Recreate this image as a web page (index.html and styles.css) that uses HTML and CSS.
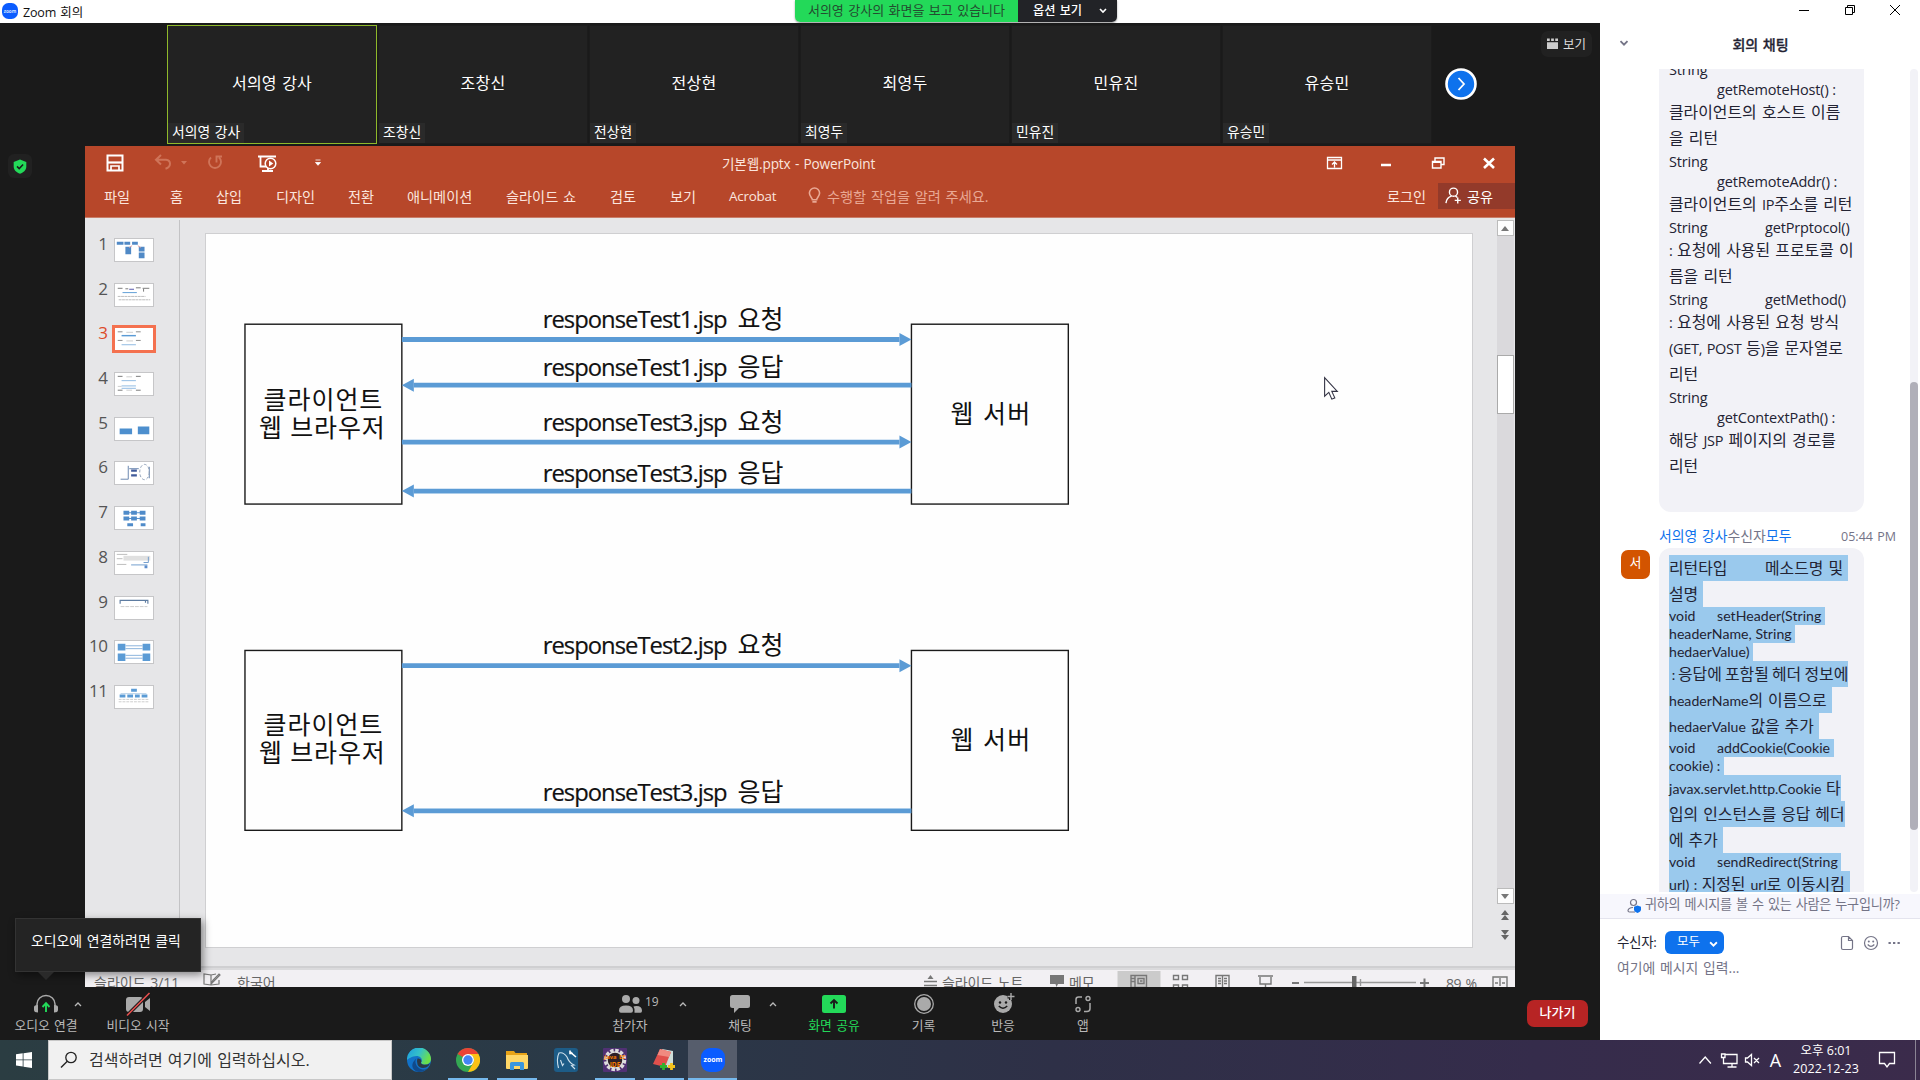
FILE: index.html
```html
<!DOCTYPE html>
<html lang="ko">
<head>
<meta charset="utf-8">
<title>Zoom 회의</title>
<link rel="stylesheet" href="styles.css">
</head>
<body>
<svg class="defs" width="0" height="0">
  <defs>
    <symbol id="caret-up" viewBox="0 0 8 6"><path d="M1 5l3-3 3 3" fill="none" stroke="currentColor" stroke-width="1.3"/></symbol>
    <symbol id="caret-down" viewBox="0 0 8 6"><path d="M1 1l3 3 3-3" fill="none" stroke="currentColor" stroke-width="1.6"/></symbol>
  </defs>
</svg>
<div class="screen">
  <header class="titlebar">
    <svg class="zoom-mini" viewBox="0 0 16 16"><rect width="16" height="16" rx="6.5" fill="#0b5cff"/><text x="8" y="9.6" font-size="4.6" font-weight="700" text-anchor="middle" fill="#cfe0ff">zoom</text></svg>
    <span class="app-title">Zoom 회의</span>
    <div class="share-banner">
      <span class="share-status">서의영 강사의 화면을 보고 있습니다</span>
      <span class="share-options">옵션 보기<svg width="8" height="6"><use href="#caret-down"/></svg></span>
    </div>
    <div class="window-controls">
      <svg viewBox="0 0 12 12"><path d="M1 6.5h10" stroke="#000"/></svg>
      <svg viewBox="0 0 12 12"><path d="M1.5 3.5h7v7h-7zM3.5 3.5v-2h7v7h-2" fill="none" stroke="#000"/></svg>
      <svg viewBox="0 0 12 12"><path d="M1 1l10 10M11 1L1 11" stroke="#000"/></svg>
    </div>
  </header>

  <main class="meeting">
    <section class="stage">
      <div class="strip">
        <div class="tile speaking"><b>서의영 강사</b><span>서의영 강사</span></div>
        <div class="tile"><b>조창신</b><span>조창신</span></div>
        <div class="tile"><b>전상현</b><span>전상현</span></div>
        <div class="tile"><b>최영두</b><span>최영두</span></div>
        <div class="tile"><b>민유진</b><span>민유진</span></div>
        <div class="tile"><b>유승민</b><span>유승민</span></div>
        <svg class="next" viewBox="0 0 32 32"><circle cx="16" cy="16" r="14.5" fill="#0e72ed" stroke="#fff" stroke-width="2.6"/><path d="M13.5 10l5.5 6-5.5 6" fill="none" stroke="#fff" stroke-width="1.8"/></svg>
        <div class="view-btn"><svg viewBox="0 0 12 12"><path d="M0 4.5h12V12H0zM0 .5h3v2.7H0zM4.5 .5h3v2.7h-3zM9 .5h3v2.7H9z" fill="#ccc"/></svg>보기</div>
      </div>

      <div class="shared">
        <div class="shield"><svg viewBox="0 0 14 15"><path d="M7 .5l6.3 2.4v4.6c0 3.6-2.6 6-6.3 7.2C3.3 13.5.7 11.1.7 7.5V2.9z" fill="#23d959"/><path d="M4 7.4l2.2 2.2 3.9-4" fill="none" stroke="#1a1a1a" stroke-width="1.5"/></svg></div>
        <div class="ppt">
          <div class="ppt-head">
            <div class="ppt-title">
              <svg class="quick" width="240" height="34" viewBox="85 146 240 34">
                <path d="M107.5 155.500h15v15h-15z" fill="none" stroke="#fff" stroke-width="2"/><path d="M108 162.500h14" stroke="#fff" stroke-width="2.200"/><path d="M111 170.500v-4.500h8v4.500" fill="none" stroke="#fff" stroke-width="1.700"/>
                <path d="M161 155l-5 4.700 5 4.700M156.500 159.700h9.500q4 .5 4 4t-4.500 5" fill="none" stroke="#cf7459" stroke-width="2"/><path d="M181 161h6l-3 3.500z" fill="#cf7459"/>
                <path d="M211 157.500a6 6 0 1 0 8 0M222 156.500h-5.500v6" fill="none" stroke="#cf7459" stroke-width="1.900"/>
                <path d="M258 156.500h18M260.500 157v9.500h5.500M262 171h11M268 168v3" fill="none" stroke="#fff" stroke-width="1.800"/><circle cx="270.500" cy="163.500" r="5.300" fill="#b7472a" stroke="#fff" stroke-width="1.500"/><path d="M269 160.500l4.300 3-4.300 3z" fill="#fff"/>
                <path d="M315.500 160h5M315.500 162.500h5l-2.500 2.800z" fill="#fff" stroke="#fff" stroke-width=".8"/>
              </svg>
              <span class="doc-name">기본웹.pptx - PowerPoint</span>
              <svg class="ppt-controls" width="195" height="34" viewBox="1320 146 195 34">
                <path d="M1327.500 157.500h14v11h-14zM1327.500 160h14M1334.500 167.500v-5M1332 164.500l2.500-2.500 2.500 2.500" fill="none" stroke="#fff" stroke-width="1.300"/>
                <path d="M1381 165h10" stroke="#fff" stroke-width="2.500"/>
                <path d="M1432.500 161.500h8.500v6.500h-8.500zM1432.500 162.300h8.500M1435 161v-3h9v6.500h-3" fill="none" stroke="#fff" stroke-width="1.400"/>
                <path d="M1484 158.500l10 9.500M1494 158.500l-10 9.500" stroke="#fff" stroke-width="2.600"/>
              </svg>
            </div>
            <nav class="tabs">
              <span>파일</span><span>홈</span><span>삽입</span><span>디자인</span><span>전환</span><span>애니메이션</span><span>슬라이드 쇼</span><span>검토</span><span>보기</span><span class="latin">Acrobat</span>
              <span class="tell"><svg viewBox="0 0 12 16"><path d="M4 12c0-2-2.800-3.200-2.800-6.300a4.800 4.800 0 0 1 9.600 0C10.800 8.800 8 10 8 12zM4 14h4" fill="none" stroke="currentColor" stroke-width="1.500"/></svg>수행할 작업을 알려 주세요.</span>
              <span class="login">로그인</span>
              <span class="share"><svg viewBox="0 0 18 18"><circle cx="9" cy="5.500" r="4.300" fill="none" stroke="#fff" stroke-width="1.500"/><path d="M1 17c.5-4 3-6.500 6-7.300M11 9.500l2 1.500M13.500 11v6.500M10.300 14.200h6.500" fill="none" stroke="#fff" stroke-width="1.500"/></svg>공유</span>
            </nav>
          </div>
          <div class="ppt-body">
            <ol class="thumbs">
              <li><i>1</i><svg viewBox="0 0 38 23"><path d="M1 3h7v3H1zM9 3h6v3H9zM17 3h6v3h-6zM10 8h6v8h-6zM24 8h6v5h-6zM24 14h6v6h-6z" fill="#5089c6"/><path d="M17 7l-3 2M23 7l3 2" stroke="#e09a9a"/></svg></li>
              <li><i>2</i><svg viewBox="0 0 38 23"><path d="M2 4.500h5M10 5h3M21 4h5M28 4.500h7M29 8v-3" stroke="#777" fill="none"/><path d="M14 5.500h5" stroke="#5252a8"/><path d="M7 9h15" stroke="#5b9bd5"/><path d="M2 13h29M3 16.500h33" stroke="#bbb" stroke-dasharray="3 .5"/></svg></li>
              <li class="sel"><i>3</i><svg viewBox="0 0 38 23"><path d="M2 4h5M21 4h5M2 13h5M21 13h5" stroke="#888"/><path d="M11 4.500h7M11 13.500h7" stroke="#ccc"/><path d="M6 8h15" stroke="#5b9bd5" stroke-width="1.500"/><path d="M6 17.500h15" stroke="#8db9e2"/></svg></li>
              <li><i>4</i><svg viewBox="0 0 38 23"><path d="M2 3.500h5M21 3.500h5M2 18h5M21 18h5" stroke="#777"/><path d="M11 4h6M2 14h4M11 18h6" stroke="#ccc"/><path d="M6 8h15M6 13.500h15M6 16h15" stroke="#8db9e2"/></svg></li>
              <li><i>5</i><svg viewBox="0 0 38 23"><path d="M4 11h13v6H4zM23 9h12v8H23z" fill="#4d8fce"/></svg></li>
              <li><i>6</i><svg viewBox="0 0 38 23"><path d="M13 4v14H5M14 7h10M35 5v12" stroke="#6784ad" fill="none"/><path d="M16 9h6M16 14h6" stroke="#405b9b" stroke-width="2.500"/><ellipse cx="30" cy="10.500" rx="5" ry="8" fill="none" stroke="#8b9cb4" stroke-dasharray="3 2"/></svg></li>
              <li><i>7</i><svg viewBox="0 0 38 23"><path d="M8 4h6v4H8zM16 4h6v4h-6zM25 4h6v4h-6zM8 10h6v4H8zM16 10h6v4h-6zM25 10h6v4h-6zM12 17h6v3h-6zM26 17h5v3h-5z" fill="#4f8bc9"/><path d="M13 6h13M13 12h13" stroke="#4f8bc9"/></svg></li>
              <li><i>8</i><svg viewBox="0 0 38 23"><path d="M1 2.500h11M1 7h6M1 13h10" stroke="#bbb"/><path d="M8 4h28v5H8z" fill="#e0e0e0"/><path d="M34 5v6h-5M16 13.500h17" stroke="#6d9acc" fill="none"/><path d="M30 14h3v3h-3z" fill="#5b8ccc"/></svg></li>
              <li><i>9</i><svg viewBox="0 0 38 23"><path d="M4.500 7V3.500h29V7M31 6V4" fill="none" stroke="#5e7ca1" stroke-width="1.200"/><path d="M5 10h28" stroke="#ccc" stroke-dasharray="4 1"/></svg></li>
              <li><i>10</i><svg viewBox="0 0 38 23"><path d="M2 3h8v7H2zM28 3h8v7h-8zM2 13h8v8H2zM28 13h8v8h-8z" fill="#5b9bd5"/><path d="M10 5h18M10 8h18M10 15h18M10 18h18" stroke="#86b0da"/></svg></li>
              <li><i>11</i><svg viewBox="0 0 38 23"><path d="M16 3h6v3h-6zM4 9h6v3H4zM12 9h6v3h-6zM20 9h5v3h-5zM27 9h6v3h-6z" fill="#5b9bd5"/><path d="M5 8h27" stroke="#b5cfe8"/><path d="M3 14h32M3 16.500h32" stroke="#ccc" stroke-dasharray="3 1"/></svg></li>
            </ol>
            <div class="canvas">
              <svg class="slide" viewBox="206 234 1267 713">
                <g fill="none" stroke="#1a1a1a" stroke-width="1.400">
                  <rect x="245" y="324" width="157" height="180"/><rect x="912" y="324" width="157" height="180"/>
                  <rect x="245" y="650.500" width="157" height="180"/><rect x="912" y="650.500" width="157" height="180"/>
                </g>
                <g stroke="#5b9bd5" stroke-width="4.800">
                  <path d="M402 339.300h498M414 385h498M402 442h498M414 491h498M402 665.700h498M414 811h498"/>
                </g>
                <g fill="#5b9bd5">
                  <path d="M912 339.300l-12-6.500v13zM402 385l12-6.500v13zM912 442l-12-6.500v13zM402 491l12-6.500v13zM912 665.700l-12-6.500v13zM402 811l12-6.500v13z"/>
                </g>
                <g class="msg">
                  <text x="543" y="328" textLength="185">responseTest1.jsp</text><text x="738" y="328" class="ko">요청</text>
                  <text x="543" y="376" textLength="185">responseTest1.jsp</text><text x="738" y="376" class="ko">응답</text>
                  <text x="543" y="431" textLength="185">responseTest3.jsp</text><text x="738" y="431" class="ko">요청</text>
                  <text x="543" y="482" textLength="185">responseTest3.jsp</text><text x="738" y="482" class="ko">응답</text>
                  <text x="543" y="654.500" textLength="185">responseTest2.jsp</text><text x="738" y="654.500" class="ko">요청</text>
                  <text x="543" y="801" textLength="185">responseTest3.jsp</text><text x="738" y="801" class="ko">응답</text>
                </g>
                <g class="node">
                  <text x="263.500" y="408.500" textLength="119">클라이언트</text><text x="259" y="436.500" textLength="126">웹 브라우저</text>
                  <text x="951" y="423" textLength="80">웹 서버</text>
                  <text x="263.500" y="734.500" textLength="119">클라이언트</text><text x="259" y="762.500" textLength="126">웹 브라우저</text>
                  <text x="951" y="749.500" textLength="80">웹 서버</text>
                </g>
                <path d="M1325.500 377.500v18.500l4.200-3.800 3 6.800 3-1.300-3-6.500h5.500z" fill="#fff" stroke="#334" stroke-width="1.100"/>
              </svg>
            </div>
            <div class="scroll">
              <div class="sbtn"><svg viewBox="0 0 8 5"><path d="M0 5l4-5 4 5z"/></svg></div>
              <div class="track"><div class="grip"></div></div>
              <div class="sbtn"><svg viewBox="0 0 8 5"><path d="M0 0l4 5 4-5z"/></svg></div>
              <svg class="jump" viewBox="0 0 8 10"><path d="M0 5l4-5 4 5zM0 10l4-5 4 5z"/></svg>
              <svg class="jump" viewBox="0 0 8 10"><path d="M0 0l4 5 4-5zM0 5l4 5 4-5z"/></svg>
            </div>
          </div>
          <div class="status">
            <span class="pg">슬라이드 3/11</span>
            <svg width="18" height="16" viewBox="0 0 18 16"><path d="M8 14V4L1 3v10l7 1 8-1V9M8 4l5-1M8 13l2-4 6-6 1 1-6 6z" fill="none" stroke="#777" stroke-width="1.200"/></svg>
            <span class="lang">한국어</span>
            <span class="notes"><svg width="13" height="13" viewBox="0 0 13 13"><path d="M3.500 5l3-4 3 4z" fill="#777"/><path d="M0 7.500h13M0 11.500h13" stroke="#777" stroke-width="1.500"/></svg>슬라이드 노트</span>
            <span class="memo"><svg width="14" height="14" viewBox="0 0 14 14"><path d="M0 1h14v9H8l-1.500 3-1-3H0z" fill="#777"/></svg>메모</span>
            <svg class="modes" width="398" height="16" viewBox="1117 971 398 16">
              <path d="M1117.500 971h43v16h-43z" fill="#cbcbcb"/>
              <g fill="none" stroke="#777" stroke-width="1.400">
                <path d="M1131 975.500h15.500v12H1131zM1135 975.500v12M1131 978.500h4M1131 981.500h4M1138 978.500h6v5h-6zM1140 981h2.500"/>
                <path d="M1173.500 975.500h5v4h-5zM1182.500 975.500h5v4h-5zM1173.500 985h5v3h-5zM1182.500 985h5v3h-5z"/>
                <path d="M1216 975.500h13V989h-13zM1222.500 975v12M1218 978.500h3M1218 981h3M1218 983.500h3M1224 978.500h3M1224 981h3M1224 983.500h3"/>
                <path d="M1258 976h15M1260 977v7h11v-7M1265.500 984v4"/>
                <path d="M1292 983h7M1420 983h9M1424.500 978.500v9" stroke-width="2"/>
                <path d="M1304 982.500h112" stroke="#999"/><path d="M1360.500 979v7" stroke="#999"/>
                <path d="M1493 977h14v12h-14zM1500 978v8M1495 983h3M1502 983h3"/>
              </g>
              <path d="M1352 976h4.500v11h-4.500z" fill="#666"/>
              <text x="1446" y="989" textLength="31">89 %</text>
            </svg>
          </div>
        </div>
      </div>

      <footer class="controls">
        <div class="ctl"><svg width="26" height="20" viewBox="0 0 26 20"><path d="M4 12V10a9 8.500 0 0 1 18 0v2" fill="none" stroke="#aaa" stroke-width="1.500"/><path d="M1 13q0-2 4-2v7.500Q1 18.500 1 16zM25 13q0-2-4-2v7.500q4 0 4-2.500z" fill="#aaa"/><path d="M13 18V9.500M9.500 13L13 9.200l3.500 3.800" fill="none" stroke="#23d959" stroke-width="1.900"/></svg><em>오디오 연결</em><svg class="up a" width="8" height="6"><use href="#caret-up"/></svg></div>
        <div class="ctl"><svg width="26" height="20" viewBox="0 1 26 20"><rect x="1" y="4" width="17" height="15" rx="3" fill="#aaa"/><path d="M20 9l5-4v13l-5-4z" fill="#aaa"/><path d="M2 22.500L24.500 0" stroke="#1a1a1a" stroke-width="3.500"/><path d="M2 22.500L24.500 0" stroke="#e8504f" stroke-width="1.600"/></svg><em>비디오 시작</em></div>
        <div class="ctl people"><svg width="26" height="20" viewBox="0 0 26 20"><circle cx="9" cy="5" r="4" fill="#aaa"/><circle cx="19" cy="6.500" r="3.500" fill="#aaa"/><path d="M2 16.500q0-5 7-5t7 5q0 2.200-2 2.200H4q-2 0-2-2.200zM17.500 18.700h6q1.500 0 1.500-2 0-4.500-5.500-4.700-2 0-3 .5 1.500 2 1 6.200z" fill="#aaa"/></svg><em>참가자</em><b class="count">19</b><svg class="up b" width="8" height="6"><use href="#caret-up"/></svg></div>
        <div class="ctl talk"><svg width="26" height="20" viewBox="0 0 26 20"><path d="M5.500 1h15q2.500 0 2.500 2.500v8q0 2.500-2.500 2.500H12l-5 5v-5H5.500Q3 14 3 11.500v-8Q3 1 5.500 1z" fill="#aaa"/></svg><em>채팅</em><svg class="up c" width="8" height="6"><use href="#caret-up"/></svg></div>
        <div class="ctl green"><svg width="26" height="20" viewBox="0 0 26 20"><rect x="1" y="1" width="24" height="18" rx="2.500" fill="#23d959"/><path d="M13 14.500V6M9.500 9.500L13 6l3.500 3.500" fill="none" stroke="#1a1a1a" stroke-width="1.900"/></svg><em>화면 공유</em></div>
        <div class="ctl record"><svg width="26" height="20" viewBox="0 0 26 20"><circle cx="13" cy="10" r="9.300" fill="none" stroke="#aaa" stroke-width="1.300"/><circle cx="13" cy="10" r="7" fill="#aaa"/></svg><em>기록</em></div>
        <div class="ctl react"><svg width="26" height="20" viewBox="0 1 26 20"><circle cx="13" cy="11" r="9" fill="#aaa"/><path d="M21 0v7M17.500 3.500h7" stroke="#1a1a1a" stroke-width="4"/><path d="M21 0v7M17.500 3.500h7" stroke="#aaa" stroke-width="1.400"/><circle cx="10" cy="9.500" r="1.200" fill="#1a1a1a"/><circle cx="16" cy="9.500" r="1.200" fill="#1a1a1a"/><path d="M8.800 13q4.200 4.500 8.400 0" fill="none" stroke="#1a1a1a" stroke-width="1.500"/></svg><em>반응</em></div>
        <div class="ctl apps-ctl"><svg width="26" height="20" viewBox="0 0 26 20"><path d="M12 3H8.500Q6 3 6 5.500V10M20 9v5.500q0 3-3 3h-3" fill="none" stroke="#aaa" stroke-width="1.500"/><circle cx="18" cy="4.500" r="2" fill="none" stroke="#aaa" stroke-width="1.400"/><circle cx="8" cy="15.500" r="2" fill="none" stroke="#aaa" stroke-width="1.400"/></svg><em>앱</em></div>
        <button class="leave">나가기</button>
      </footer>
      <div class="tooltip">오디오에 연결하려면 클릭</div>
    </section>

    <aside class="chat">
      <div class="chat-head"><svg width="10" height="7" viewBox="0 0 8 6"><use href="#caret-down"/></svg><strong>회의 채팅</strong></div>
      <div class="chat-log">
        <div class="messages">
          <div class="bubble first"><p class="e">String</p><p class="e">&#9;getRemoteHost() :</p><p>클라이언트의 호스트 이름</p><p>을 리턴</p><p class="e">String</p><p class="e">&#9;getRemoteAddr() :</p><p>클라이언트의 <s>IP</s>주소를 리턴</p><p class="e">String&#9;&#9;getPrptocol()</p><p><s>: </s>요청에 사용된 프로토콜 이</p><p>름을 리턴</p><p class="e">String&#9;&#9;getMethod()</p><p><s>: </s>요청에 사용된 요청 방식</p><p><s>(GET, POST </s>등<s>)</s>을 문자열로</p><p>리턴</p><p class="e">String</p><p class="e">&#9;getContextPath() :</p><p>해당 <s>JSP</s> 페이지의 경로를</p><p>리턴</p></div>
          <div class="meta"><span><a>서의영 강사</a>수신자<a>모두</a></span><time>05:44 PM</time></div>
          <div class="row">
            <div class="avatar">서</div>
            <div class="bubble second"><p><mark>리턴타입&#9;메소드명 및 </mark></p><p><mark>설명 </mark></p><p class="e"><mark>void&#9;setHeader(String </mark></p><p class="e"><mark>headerName, String </mark></p><p class="e"><mark>hedaerValue) </mark></p><p class="tight"><mark><s> : </s>응답에 포함될 헤더 정보에</mark></p><p><mark><s>headerName</s>의 이름으로 </mark></p><p><mark><s>hedaerValue </s>값을 추가 </mark></p><p class="e"><mark>void&#9;addCookie(Cookie </mark></p><p class="e"><mark>cookie) : </mark></p><p><mark><s>javax.servlet.http.Cookie </s>타</mark></p><p><mark>입의 인스턴스를 응답 헤더</mark></p><p><mark>에 추가 </mark></p><p class="e"><mark>void&#9;sendRedirect(String </mark></p><p><mark><s>url) : </s>지정된 <s>url</s>로 이동시킴 </mark></p></div>
          </div>
        </div>
        <div class="chat-track"><div class="chat-grip"></div></div>
      </div>
      <div class="notice"><svg width="16" height="16" viewBox="0 0 16 16"><circle cx="6.500" cy="4.500" r="3" fill="none" stroke="#747487" stroke-width="1.200"/><path d="M8 14H2.500Q1 14 1 12.500 1.500 9.500 6 9.500" fill="none" stroke="#747487" stroke-width="1.200"/><path d="M10.500 7.500l3.500 1.200v2.500q0 2.500-3.500 3.800Q7 13.700 7 11.200V8.700z" fill="#0e72ed"/></svg><span>귀하의 메시지를 볼 수 있는 사람은 누구입니까?</span></div>
      <div class="compose">
        <div class="to"><span>수신자:</span><span class="pill">모두<svg width="9" height="7" viewBox="0 0 8 6"><use href="#caret-down"/></svg></span>
          <div class="tools">
            <svg width="14" height="16" viewBox="0 0 14 16"><path d="M3 1.500h5.500l4 4v7.500q0 1.500-1.500 1.500H3q-1.500 0-1.500-1.500V3Q1.500 1.500 3 1.500zM8.500 2v3.500h3.500" fill="none" stroke="#747487" stroke-width="1.200"/></svg>
            <svg width="16" height="16" viewBox="0 0 16 16"><circle cx="8" cy="8" r="6.500" fill="none" stroke="#747487" stroke-width="1.200"/><circle cx="5.800" cy="6.500" r="1" fill="#747487"/><circle cx="10.200" cy="6.500" r="1" fill="#747487"/><path d="M4.700 9.500q3.300 3.800 6.600 0" fill="none" stroke="#747487" stroke-width="1.200"/></svg>
            <svg width="12" height="4" viewBox="0 0 12 4"><path d="M.5 1h2.300v2H.5zM5 1h2.300v2H5zM9.500 1h2.300v2H9.500z" fill="#747487"/></svg>
          </div>
        </div>
        <div class="input">여기에 메시지 입력...</div>
      </div>
    </aside>
  </main>

  <footer class="taskbar">
    <div class="start"><svg width="16" height="16" viewBox="0 0 16 16"><path d="M0 2.300l6.700-1v6.200H0zM7.500 1.200L16 0v7.500H7.500zM0 8.300h6.700v6.300l-6.700-1zM7.500 8.300H16V16l-8.500-1.200z" fill="#fff"/></svg></div>
    <div class="search"><svg width="18" height="18" viewBox="0 0 18 18"><circle cx="11" cy="6.500" r="5.200" fill="none" stroke="#222" stroke-width="1.300"/><path d="M7.300 10.200L1 16.500" stroke="#222" stroke-width="1.400"/></svg>검색하려면 여기에 입력하십시오.</div>
    <div class="apps">
      <span><svg viewBox="0 0 24 24"><defs><linearGradient id="ed" x1="0" x2="1" y1="0" y2=".4"><stop offset="0" stop-color="#1b9de2"/><stop offset=".55" stop-color="#35c1c8"/><stop offset="1" stop-color="#6be04a"/></linearGradient></defs><circle cx="12" cy="12" r="12" fill="#1272c8"/><path d="M0 12A12 12 0 0 1 24 11c0 3.500-2.500 5.500-6 5.500-3 0-4.300-1-3.800-2 1.800-2.500 0-6.500-4.700-6.500C5 8 1 11 0 12z" fill="url(#ed)"/><path d="M9.300 10.500c-2 3-.5 9.500 6 11 2.500.3 4-.5 5.200-1.500A12 12 0 0 1 12 24C6 23 2 17 9.300 10.500z" fill="#114a8b"/><path d="M10.500 10.500q3.500-.5 4 2.500-1.800 3.300 2.500 3.700 3.500.2 6-1.500-1 3-4 4.300-6.500 1.500-8.500-3-1.200-3.300 0-6z" fill="#2b3947"/></svg></span>
      <span class="run"><svg viewBox="0 0 24 24"><circle cx="12" cy="12" r="12" fill="#34a853"/><path d="M12 12L1.600 6A12 12 0 0 1 22.400 6z" fill="#ea4335"/><path d="M22.400 6A12 12 0 0 1 12 24l5.200-9a6 6 0 0 0 0-6L12 6z" fill="#fbc116"/><circle cx="12" cy="12" r="6" fill="#fff"/><circle cx="12" cy="12" r="4.700" fill="#4285f4"/></svg></span>
      <span class="run"><svg viewBox="0 0 24 24"><path d="M1 3h8l1.500 2H22v4H1z" fill="#e8a317"/><path d="M1 7h22v13q0 1-1 1H2q-1 0-1-1z" fill="#ffd767"/><path d="M5 22v-6.500q0-1.500 1.500-1.500h11q1.500 0 1.500 1.500V22h-4v-4H9v4z" fill="#3a96dd"/></svg></span>
      <span><svg viewBox="0 0 24 24"><rect width="24" height="24" rx="3" fill="#1d5c87"/><path d="M4.500 20C3 14 3 9 5 5c3-1 6 1 8 4 1.200 3.500 3.500 6.500 7 8l-2.500.5L21 21M6.500 12l2 5.500 1.500-2" fill="none" stroke="#cfe0ec" stroke-width="1.100"/><path d="M15.500 3l3 3L22 9M16 2.500v3h3" fill="none" stroke="#fff" stroke-width="1.600"/></svg></span>
      <span class="run"><svg viewBox="0 0 24 24"><rect width="24" height="24" rx="1" fill="#503174"/><circle cx="12" cy="12" r="9" fill="#2c2026" stroke="#ddd" stroke-width="4.500" stroke-dasharray="3.200 1.500"/><circle cx="12" cy="12" r="8" fill="#2c2026" stroke="#ddd" stroke-width="1.500"/><text x="12" y="11" font-size="5.800" font-weight="700" text-anchor="middle" fill="#f57c00">Java EE</text><text x="12" y="18.500" font-size="6.500" font-weight="700" text-anchor="middle" fill="#f57c00">IDE</text></svg></span>
      <span class="run"><svg viewBox="0 0 24 24"><path d="M10 1l11 2v15l-8 2z" fill="#cfded9"/><path d="M8 1l11 3-6 15L1 16z" fill="#e0504c"/><path d="M8 1l11 3-2 5L5.500 7z" fill="#f08a80"/><path d="M11.500 15v7M8 18.500h7" stroke="#2fb32f" stroke-width="2.800"/><path d="M19.500 15v7M16 18.500h7" stroke="#f3c21b" stroke-width="2.800"/></svg></span>
      <span class="run on"><svg viewBox="0 0 24 24"><rect width="24" height="24" rx="9" fill="#0b5cff"/><text x="12" y="14" font-size="7" font-weight="700" text-anchor="middle" fill="#fff">zoom</text></svg></span>
    </div>
    <div class="tray">
      <svg width="220" height="40" viewBox="1695 1040 220 40">
        <g fill="none" stroke="#fff" stroke-width="1.300">
          <path d="M1699.500 1063.500l5.700-6.500 5.700 6.500"/>
          <path d="M1725.500 1054.500h11.500v9h-11.500M1732 1063.500v3.500M1727.500 1067h9M1721.500 1054h3.500v3.500h-3.500zM1723.500 1058v5.500h3"/>
          <path d="M1745.500 1058h2l4-3.500v11l-4-3.500h-2zM1754 1058l5 5M1759 1058l-5 5"/>
          <path d="M1879.500 1052.500h15v11h-5l-2.500 3.500-2.500-3.500h-5z"/>
        </g>
        <text class="ime" x="1775.500" y="1067" text-anchor="middle">A</text>
        <text class="clock" x="1826" y="1055" text-anchor="middle" textLength="51">오후 6:01</text>
        <text class="clock" x="1826" y="1073" text-anchor="middle" textLength="66">2022-12-23</text>
      </svg>
      <i class="peek"></i>
    </div>
  </footer>
</div>
</body>
</html>
```
FILE: styles.css
```css
* { box-sizing: border-box; }
body { margin: 0; background: #1a1a1a; }
.defs { position: absolute; }
.screen {
  width: 1920px; height: 1080px; overflow: hidden;
  display: flex; flex-direction: column;
  font-family: "Open Sans", "Noto Sans CJK KR", sans-serif;
  font-size: 13px; word-spacing: .08em;
}
svg { display: block; flex: none; }
em, i { font-style: normal; }
p { margin: 0; }

/* window title bar */
.titlebar {
  height: 23px; flex: none; background: #fff; position: relative;
  display: flex; align-items: center; padding: 0 19px 1px 2px;
}
.zoom-mini { width: 16px; height: 16px; }
.app-title { margin: 0 0 0 5px; font-size: 12.5px; color: #111; letter-spacing: -.15px; }
.share-banner {
  position: absolute; left: 795px; top: 0; height: 22px; width: 322px;
  display: flex; border-radius: 0 0 5px 5px; overflow: hidden; line-height: 20px;
  box-shadow: 0 1px 2px #999;
}
.share-status { width: 223px; background: #23d959; color: #244c30; text-align: center; white-space: nowrap; }
.share-options {
  flex: 1; background: #222327; color: #fff; font-weight: 500; font-size: 12.2px; padding: 0 10px 0 15px;
  display: flex; align-items: center; justify-content: space-between;
}
.window-controls { margin-left: auto; display: flex; gap: 33.5px; margin-top: -2px; }
.window-controls svg { width: 12px; height: 12px; }

.meeting { height: 1017px; flex: none; display: flex; }
.stage { width: 1600px; background: #1a1a1a; display: flex; flex-direction: column; position: relative; }

/* participant strip */
.strip { height: 123px; padding: 2px 8px 0 167px; display: flex; gap: 1px; }
.tile {
  width: 210px; height: 119px; border: 1px solid #1c1c1c; background: #222; color: #fff;
  position: relative; display: flex; align-items: center; justify-content: center;
}
.tile.speaking { border-color: #8fb92a; }
.tile b { font-weight: 400; font-size: 16px; letter-spacing: .2px; margin-top: -6px; }
.tile span {
  position: absolute; left: 0; bottom: 0; height: 20px; padding: 0 4px; background: #2a2a2a;
  font-size: 13.8px; line-height: 18px; white-space: nowrap;
}
.next { width: 32px; height: 32px; margin: 43px 0 0 12px; }
.view-btn {
  margin: 6px 0 0 auto; width: 51px; height: 26px; border-radius: 7px; background: #212121; color: #ddd;
  display: flex; align-items: center; justify-content: center; gap: 5px; font-size: 12.5px; padding-bottom: 2px;
}
.view-btn svg { width: 11px; height: 11px; }

/* shared screen */
.shared { height: 841px; display: flex; }
.shield {
  width: 24px; height: 24px; margin: 8px 53px 0 8px; border-radius: 6px; background: #212121;
  display: flex; align-items: center; justify-content: center;
}
.shield svg { width: 14px; height: 15px; }
.ppt { width: 1430px; height: 841px; overflow: hidden; background: #e6e6e8; display: flex; flex-direction: column; }
.ppt-head { height: 72px; flex: none; background: #b7472a; border-bottom: 1px solid #c97e69; color: #fff; }
.ppt-title { height: 34px; display: flex; align-items: center; }
.doc-name { font-size: 13.6px; letter-spacing: -.15px; line-height: 34px; color: #fbe5de; margin-left: 397px; padding-top: 2px; }
.ppt-controls { margin-left: auto; }
.tabs {
  display: grid; grid-template-columns: 66px 46px 60px 72px 59px 99px 104px 60px 59px 79px 579px 51px 77px;
  padding-left: 19px; height: 31px; align-items: center; font-size: 14.2px; color: #fbe5de; white-space: nowrap;
}
.tabs .latin { font-size: 13.4px; letter-spacing: -.2px; }
.tell { display: flex; gap: 6px; align-items: center; color: #e9a894; }
.tell svg { width: 13px; height: 17px; }
.share {
  display: flex; align-items: center; gap: 5px; height: 26px; padding-left: 7px; background: #933a2a; color: #fff;
}
.share svg { width: 17px; height: 17px; }

.ppt-body { height: 750px; flex: none; display: flex; border-bottom: 2px solid #cfcfd1; }
.thumbs {
  width: 95px; margin: 2px 0 0; padding: 18px 0 0; border-right: 1px solid #c3c3c5; list-style: none;
  display: flex; flex-direction: column;
}
.thumbs li { height: 44.7px; flex: none; display: grid; grid-template-columns: 22.5px 40px; column-gap: 6.5px; align-items: start; }
.thumbs i { font-size: 17px; line-height: 11px; text-align: right; color: #555; letter-spacing: -.5px; }
.thumbs svg { width: 40px; height: 24px; border: 1px solid #c6c6c8; background: #fff; }
.thumbs .sel i { color: #dd4a28; }
.thumbs .sel svg { outline: 2px solid #f4714f; border-color: #f4714f; }
.canvas { padding: 15px 0 0 25px; width: 1316px; }
.slide { width: 1268px; height: 715px; background: #fefefe; border: 1px solid #cfcfd1; }
.slide text { font-family: "Open Sans", "Noto Sans CJK KR", sans-serif; fill: #111; word-spacing: 0; }
.msg text { font-size: 23.8px; stroke: #111; stroke-width: .2px; }
.msg .ko { font-size: 25px; stroke: none; }
.node text { font-size: 25px; }
.scroll { width: 18px; padding-top: 2px; display: flex; flex-direction: column; align-items: center; }
.sbtn { width: 17px; height: 16px; border: 1px solid #bbb; background: #fdfdfd; display: flex; align-items: center; justify-content: center; }
.sbtn svg { width: 8px; height: 5px; fill: #777; }
.track { height: 652px; width: 17px; background: #dad9dc; padding-top: 119px; }
.grip { height: 59px; background: #fff; border: 1px solid #aaa; }
.jump { width: 8px; height: 10px; margin-top: 6px; margin-bottom: 4px; fill: #666; }
.status {
  height: 19px; padding: 1px 0 0 9px; border-top: 2px solid #dadadc; background: #f2f0f3; color: #666;
  display: flex; align-items: flex-start; font-size: 14px; line-height: 23px; white-space: nowrap;
}
.pg { width: 109px; }
.lang { margin-left: 16px; width: 687px; }
.notes, .memo { display: flex; gap: 5px; letter-spacing: -.1px; }
.notes svg, .memo svg { margin-top: 3px; }
.notes { width: 126px; }
.memo { width: 67px; }
.modes text { font-size: 14px; fill: #666; }

/* meeting controls */
.controls { height: 53px; display: flex; color: #b9b9b9; }
.ctl { position: relative; width: 92px; flex: none; display: flex; flex-direction: column; align-items: center; padding-top: 7px; }
.ctl > svg:first-child { overflow: visible; }
.ctl em { font-size: 12.8px; line-height: 20px; margin-top: 1px; white-space: nowrap; }
.people { margin-left: 400px; }
.talk { width: 128px; }
.green { width: 60px; color: #23d959; }
.record { width: 119px; }
.react { width: 40px; }
.apps-ctl { width: 120px; }
.up { position: absolute; top: 14px; }
.up.a { left: 74px; }
.up.b { left: 95px; }
.up.c { left: 93px; }
.count { position: absolute; left: 61px; top: 7px; font-size: 12px; line-height: 16px; font-weight: 400; }
.leave {
  margin: 13px 12px 0 auto; width: 61px; height: 27px; border: 0; border-radius: 7px; background: #b72424; color: #fff;
  font: 500 13px/22px "Open Sans", "Noto Sans CJK KR", sans-serif; padding: 0 0 3px;
}
.tooltip {
  position: absolute; left: 15px; top: 895px; width: 186px; height: 54px; background: #242424; border: 1px solid #333;
  color: #fff; font-size: 13.9px; line-height: 44px; padding-left: 15px; box-shadow: 2px 3px 8px rgba(0,0,0,.45); white-space: nowrap;
}
.tooltip::after {
  content: ""; position: absolute; left: 22px; top: 53px; border: 8px solid transparent; border-top-color: #2a2a2a; border-bottom: 0;
}

/* chat panel */
.chat { width: 320px; background: #fff; color: #232333; display: flex; flex-direction: column; }
.chat-head { height: 46px; display: flex; align-items: center; padding: 0 0 5px 19px; color: #747487; }
.chat-head strong { width: 263px; text-align: center; font-size: 14px; font-weight: 500; color: #232333; -webkit-text-stroke: .3px #232333; }
.chat-log { height: 823px; overflow: hidden; display: flex; justify-content: space-between; padding-right: 2px; }
.messages { width: 296px; padding-left: 21px; }
.bubble { width: 205px; background: #f2f2f7; font-size: 15.9px; white-space: pre; tab-size: 48px; word-spacing: .07em; }
.bubble p { height: 26px; line-height: 25px; }
.bubble s { text-decoration: none; font-size: 14.5px; letter-spacing: -.3px; }
.bubble .e { height: 20px; line-height: 20px; font-size: 14.5px; letter-spacing: -.15px; word-spacing: 0; }
.first { margin-left: 38px; padding: 0 10px; height: 443px; border-radius: 0 0 12px 12px; overflow: hidden; }
.first p:first-child { margin-top: -9px; }
.meta { margin-left: 38px; height: 36px; padding-top: 12px; display: flex; justify-content: space-between; width: 237px; line-height: 24px; font-size: 13.9px; color: #747487; }
.meta a { color: #0e72ed; }
.meta time { font-size: 12.5px; line-height: 26px; }
.row { display: flex; gap: 9px; }
.avatar { width: 29px; height: 29px; margin-top: 2px; border-radius: 7px; background: #d35400; color: #fff; text-align: center; line-height: 24px; }
.second { padding: 7px 10px; border-radius: 12px 12px 0 0; flex: none; word-spacing: .05em; }
.second mark { display: inline-block; height: 26px; background: #9ac9ed; color: #232333; }
.second .e, .second s { font-family: Lato, "Noto Sans CJK KR", sans-serif; font-size: 14.1px; letter-spacing: .03px; }
.second .e, .second .e mark { height: 18px; line-height: 18px; }
.second p { line-height: 26px; }
.second .tight { word-spacing: -.06em; }
.chat-track { width: 8px; height: 823px; border-radius: 4px; background: #f2f2f7; padding-top: 313px; }
.chat-grip { height: 448px; border-radius: 4px; background: #b0afb9; }
.notice {
  margin-top: 2px; height: 25px; display: flex; align-items: center; gap: 2px; padding-left: 27px; background: #f7f7fd;
  border-bottom: 1px solid #e4e4ee; color: #747487; font-size: 13.1px; letter-spacing: -.25px; white-space: nowrap;
}
.notice span { padding-bottom: 5px; }
.compose { padding: 12px 20px 0 17px; }
.to { height: 23px; display: flex; align-items: center; font-size: 13.5px; line-height: 20px; }
.to > span:first-child { width: 48px; letter-spacing: -.3px; padding-bottom: 2px; }
.to .pill { width: 59px; height: 23px; border-radius: 6px; background: #0e72ed; color: #fff; display: flex; align-items: center; gap: 9px; padding: 0 0 2px 12px; font-size: 12.5px; }
.pill svg { margin-top: 5px; }
.tools { margin-left: auto; display: flex; align-items: center; gap: 9px; }
.input { color: #747487; font-size: 13.9px; line-height: 24px; margin-top: 2px; }

/* windows taskbar */
.taskbar { height: 40px; flex: none; display: flex; background: linear-gradient(90deg, #2b3d42 0, #2a3947 30%, #2e3047 55%, #352c4b 80%, #3b2b4b 100%); }
.start { width: 48px; display: flex; align-items: center; justify-content: center; }
.search { width: 344px; background: #f1f1f1; border: 1px solid #c8c8c8; display: flex; align-items: center; gap: 11px; padding-left: 11px; font-size: 16px; line-height: 34px; color: #333; }
.apps { display: flex; padding-left: 2px; }
.apps span { width: 49px; display: flex; align-items: center; justify-content: center; position: relative; }
.apps svg { width: 24px; height: 24px; }
.run { background: linear-gradient(#76b9ed, #76b9ed) center bottom / 40px 2px no-repeat; }
.on { background: linear-gradient(#76b9ed, #76b9ed) center bottom / 49px 2px no-repeat #565d6c; }
.tray { margin-left: auto; display: flex; padding-right: 4px; }
.peek { width: 1px; background: #8b8494; }
.tray text { fill: #fff; word-spacing: 0; }
.ime { font-size: 18px; }
.clock { font-size: 12.5px; }
```
